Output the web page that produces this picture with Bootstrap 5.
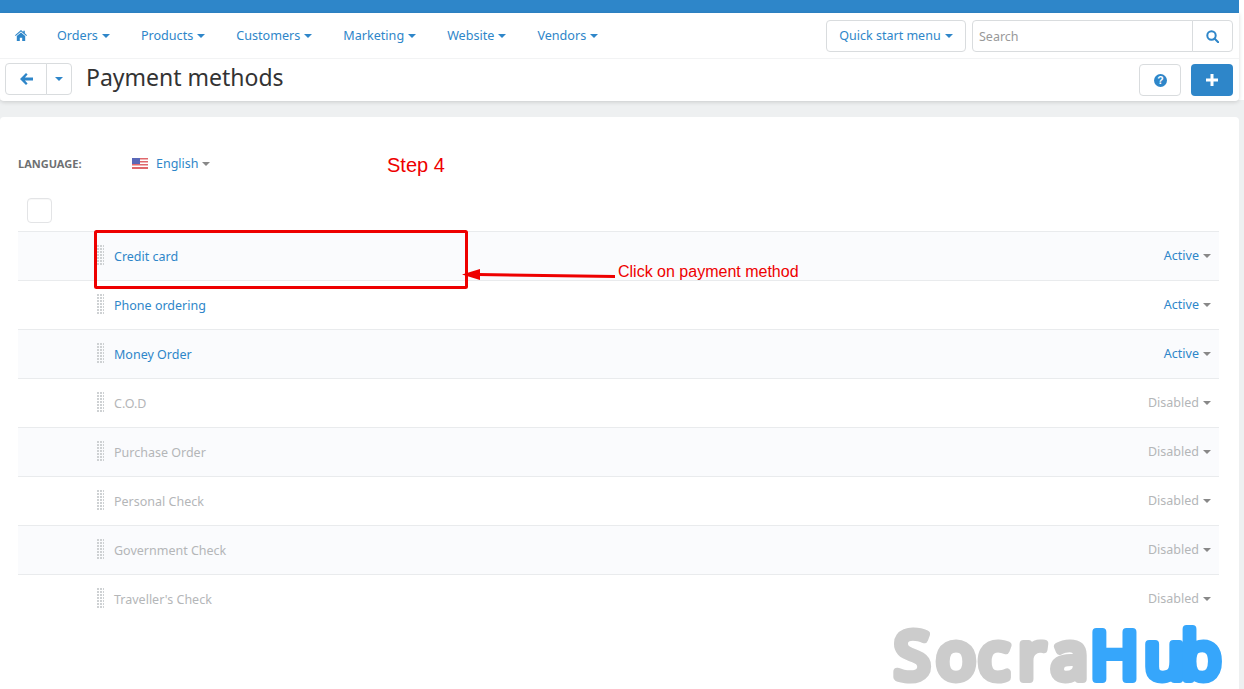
<!DOCTYPE html>
<html lang="en">
<head>
  <meta charset="UTF-8">
  <meta name="viewport" content="width=device-width, initial-scale=1.0">
  <title>Payment methods</title>
  <link href="https://cdn.jsdelivr.net/npm/bootstrap@5.3.0/dist/css/bootstrap.min.css" rel="stylesheet">
  <style>
    html, body { height: 689px; overflow: hidden; }
    body { background: linear-gradient(#fff 0, #fff 100px, #eef0f1 100px); font-family: "Noto Sans", sans-serif; font-size: 12.5px; color: #333; position: relative; }
    a { text-decoration: none; color: #2e86c9; }
    .page-wrap { width: 1239px; }
    .top-strip { height: 13px; background: #2e86c9; }
    .head-panel { background: #fff; height: 88px; border-radius: 0 0 4px 4px; box-shadow: 0 1px 4px rgba(0, 0, 0, .16); }
    .nav-row { height: 46px; border-bottom: 1px solid #f2f3f4; padding: 7px 6px 0 15px; }
    .nav-link-item { color: #2e86c9; font-size: 12.6px; line-height: 32px; margin-right: 31px; white-space: nowrap; }
    .nav-home { margin-right: 30px; line-height: 30px; }
    .tri { display: inline-block; width: 0; height: 0; border-left: 4px solid transparent; border-right: 4px solid transparent; border-top: 4px solid currentColor; vertical-align: 2px; margin-left: 4px; }
    .tri-grey { color: #888; }
    .plain-btn { background: #fff; border: 1px solid #d9dcde; color: #2e86c9; border-radius: 4px; font-size: 12.5px; height: 32px; padding: 0; display: flex; align-items: center; justify-content: center; }
    .plain-btn:hover { background: #fff; border-color: #d9dcde; color: #2e86c9; }
    .quick-btn { width: 140px; margin-right: 6px; }
    .search-box { width: 261px; height: 32px; }
    .search-box .form-control { height: 32px; font-size: 12.5px; padding: 0 6px; border-color: #d9dcde; border-radius: 4px 0 0 4px; }
    .search-box .form-control::placeholder { color: #999; }
    .search-box .plain-btn { width: 41px; border-radius: 0 4px 4px 0; margin-left: -1px; }
    .title-row { height: 42px; padding: 4px 6px 0 5px; }
    .back-btn { width: 42px; border-radius: 4px 0 0 4px; }
    .back-caret { width: 26px; border-radius: 0 4px 4px 0; margin-left: -1px; }
    .page-title { font-size: 23px; font-weight: 400; line-height: 28px; margin: 0 0 0 14px; color: #333; }
    .help-btn { width: 42px; margin-right: 10px; margin-top: 1px; }
    .add-btn { width: 42px; height: 32px; background: #2e86c9; border: 0; border-radius: 4px; margin-top: 1px; display: flex; align-items: center; justify-content: center; }
    .main-panel { background: #fff; margin-top: 16px; height: 572px; border-radius: 4px 4px 0 0; padding: 0 20px 0 18px; }
    .lang-row { height: 81px; padding-top: 35px; }
    .lang-label { width: 114px; font-size: 11px; font-weight: 700; color: #6e7072; text-transform: uppercase; line-height: 23px; }
    .lang-pick { line-height: 24px; color: #2e86c9; }
    .lang-pick svg { margin-right: 8px; vertical-align: -1px; }
    .lang-pick .tri { margin-left: 3px; }
    .check-box { width: 25px; height: 25px; border: 1px solid #e3e4e6; border-radius: 4px; margin-left: 9px; box-shadow: inset 0 1px 1px rgba(0, 0, 0, .03); }
    .check-row { height: 33px; }
    .pay-row { height: 49px; border-top: 1px solid #e9ebed; padding: 0 8px 0 79px; }
    .pay-row:nth-child(odd) { background: #fafbfd; }
    .drag-dots { width: 7px; height: 20px; margin-right: 10px; margin-top: -2px; background-image: radial-gradient(circle at 1px 1px, #cdd0d2 .7px, transparent 1px); background-size: 3px 3px; }
    .pay-name { color: #2e86c9; margin-top: 2px; }
    .pay-state { color: #2e86c9; }
    .pay-off .pay-name, .pay-off .pay-state { color: #b4b6b8; }
    .mark-layer { position: absolute; left: 0; top: 0; pointer-events: none; }
    .note-text { font-family: "Liberation Sans", sans-serif; fill: #ee0000; }
    .logo-text { font-family: "Noto Sans", sans-serif; font-weight: 400; font-size: 66px; stroke-width: 8; stroke-linejoin: round; stroke-linecap: round; }
  </style>
</head>
<body>
  <div class="page-wrap">
    <div class="top-strip"></div>
    <div class="head-panel">
      <div class="nav-row d-flex align-items-start">
        <a href="#" class="nav-home">
          <svg width="12" height="11" viewBox="0 0 12 11" fill="#2e86c9"><path d="M6 0 0 5.200l.7.8L6 1.500 11.300 6l.7-.8L9.800 3.300V.7H8.300v1.300z"/><path d="M6 2.500 1.800 6v5h3V7.800h2.400V11h3V6z"/></svg>
        </a>
        <a href="#" class="nav-link-item">Orders<span class="tri"></span></a>
        <a href="#" class="nav-link-item">Products<span class="tri"></span></a>
        <a href="#" class="nav-link-item">Customers<span class="tri"></span></a>
        <a href="#" class="nav-link-item">Marketing<span class="tri"></span></a>
        <a href="#" class="nav-link-item">Website<span class="tri"></span></a>
        <a href="#" class="nav-link-item">Vendors<span class="tri"></span></a>
        <button type="button" class="btn plain-btn quick-btn ms-auto">Quick start menu<span class="tri ms-1"></span></button>
        <div class="input-group search-box flex-nowrap">
          <input type="text" class="form-control" placeholder="Search">
          <button type="button" class="btn plain-btn">
            <svg width="13" height="13" viewBox="0 0 13 13" fill="none" stroke="#2e86c9" stroke-width="2"><circle cx="5.500" cy="5.500" r="4.200"/><path d="m8.500 8.500 3.700 3.700" stroke-linecap="round"/></svg>
          </button>
        </div>
      </div>
      <div class="title-row d-flex align-items-start">
        <button type="button" class="btn plain-btn back-btn">
          <svg width="13" height="12" viewBox="0 0 13 12" fill="#2e86c9"><path d="M6 0 0 6l6 6 1.600-1.600L4.900 7.500H13v-3H4.900l2.700-2.900z"/></svg>
        </button>
        <button type="button" class="btn plain-btn back-caret"><span class="tri m-0"></span></button>
        <h1 class="page-title">Payment methods</h1>
        <button type="button" class="btn plain-btn help-btn ms-auto">
          <svg width="13" height="13" viewBox="0 0 13 13"><circle cx="6.500" cy="6.500" r="6.500" fill="#2e86c9"/><text x="6.500" y="10.300" text-anchor="middle" font-family="Liberation Sans, sans-serif" font-weight="700" font-size="10.500" fill="#fff">?</text></svg>
        </button>
        <button type="button" class="add-btn">
          <svg width="12" height="12" viewBox="0 0 12 12" fill="#fff"><path d="M4.500 0h3v4.500H12v3H7.500V12h-3V7.500H0v-3h4.500z"/></svg>
        </button>
      </div>
    </div>

    <div class="main-panel">
      <div class="lang-row d-flex align-items-start">
        <div class="lang-label">Language:</div>
        <a href="#" class="lang-pick">
          <svg width="16" height="11" viewBox="0 0 16 11">
            <rect width="16" height="11" fill="#fff"/>
            <path d="M0 0h16v1.500H0zM0 3h16v1.500H0zM0 6h16v1.500H0zM0 9h16v2H0z" fill="#e0686c"/>
            <rect width="8" height="6" fill="#5a68b8"/>
          </svg>English<span class="tri tri-grey"></span>
        </a>
      </div>
      <div class="check-row"><div class="check-box"></div></div>
      <div>
        <div class="pay-row d-flex align-items-center"><span class="drag-dots"></span><a href="#" class="pay-name">Credit card</a><a href="#" class="pay-state ms-auto">Active<span class="tri tri-grey"></span></a></div>
        <div class="pay-row d-flex align-items-center"><span class="drag-dots"></span><a href="#" class="pay-name">Phone ordering</a><a href="#" class="pay-state ms-auto">Active<span class="tri tri-grey"></span></a></div>
        <div class="pay-row d-flex align-items-center"><span class="drag-dots"></span><a href="#" class="pay-name">Money Order</a><a href="#" class="pay-state ms-auto">Active<span class="tri tri-grey"></span></a></div>
        <div class="pay-row pay-off d-flex align-items-center"><span class="drag-dots"></span><a href="#" class="pay-name">C.O.D</a><a href="#" class="pay-state ms-auto">Disabled<span class="tri tri-grey"></span></a></div>
        <div class="pay-row pay-off d-flex align-items-center"><span class="drag-dots"></span><a href="#" class="pay-name">Purchase Order</a><a href="#" class="pay-state ms-auto">Disabled<span class="tri tri-grey"></span></a></div>
        <div class="pay-row pay-off d-flex align-items-center"><span class="drag-dots"></span><a href="#" class="pay-name">Personal Check</a><a href="#" class="pay-state ms-auto">Disabled<span class="tri tri-grey"></span></a></div>
        <div class="pay-row pay-off d-flex align-items-center"><span class="drag-dots"></span><a href="#" class="pay-name">Government Check</a><a href="#" class="pay-state ms-auto">Disabled<span class="tri tri-grey"></span></a></div>
        <div class="pay-row pay-off d-flex align-items-center"><span class="drag-dots"></span><a href="#" class="pay-name">Traveller's Check</a><a href="#" class="pay-state ms-auto">Disabled<span class="tri tri-grey"></span></a></div>
      </div>
    </div>
  </div>

  <!-- annotations drawn on top of the screenshot -->
  <svg class="mark-layer" width="1244" height="689" viewBox="0 0 1244 689">
    <rect x="95.500" y="231.500" width="371" height="56" rx="1" fill="none" stroke="#ee0000" stroke-width="3"/>
    <path d="M615 276.500 478 274.500" stroke="#ee0000" stroke-width="3" fill="none"/>
    <path d="M462 274.500 480 269v11z" fill="#ee0000"/>
    <text class="note-text" x="387" y="172" font-size="20">Step 4</text>
    <text class="note-text" x="618" y="277" font-size="16">Click on payment method</text>
    <text class="logo-text" y="679"><tspan fill="#cccccc" stroke="#cccccc" x="894 936 978 1018 1051">Socra</tspan><tspan fill="#36a6fb" stroke="#36a6fb" x="1090 1144 1181">Hub</tspan></text>
  </svg>

  <script src="https://cdn.jsdelivr.net/npm/bootstrap@5.3.0/dist/js/bootstrap.bundle.min.js"></script>
</body>
</html>
